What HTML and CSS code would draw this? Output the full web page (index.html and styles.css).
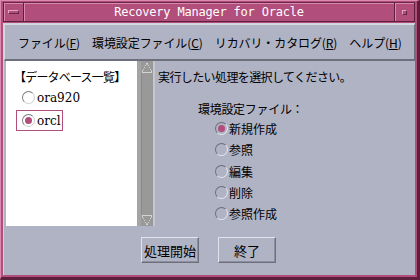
FILE: index.html
```html
<!DOCTYPE html>
<html lang="ja">
<head>
<meta charset="utf-8">
<title>Recovery Manager for Oracle</title>
<link rel="stylesheet" href="styles.css">
</head>
<body>
<div class="window">
  <div class="titlebar">
    <div class="tb-btn tb-menu"><span class="bar"></span></div>
    <div class="tb-title">Recovery Manager for Oracle</div>
    <div class="tb-btn tb-max"><span class="sq"></span></div>
  </div>
  <div class="client">
    <div class="menubar">
      <span class="mi">ファイル(<u>F</u>)</span>
      <span class="mi">環境設定ファイル(<u>C</u>)</span>
      <span class="mi">リカバリ・カタログ(<u>R</u>)</span>
      <span class="mi">ヘルプ(<u>H</u>)</span>
    </div>
    <div class="main">
      <div class="listpane">
        <div class="list-head">【データベース一覧】</div>
        <div class="list-item"><span class="radio white"></span>ora920</div>
        <div class="list-item focused"><span class="radio white on"></span>orcl</div>
      </div>
      <div class="scrollbar">
        <div class="sb-arrow sb-up"></div>
        <div class="sb-track"></div>
        <div class="sb-arrow sb-down"></div>
      </div>
      <div class="rightpane">
        <div class="prompt">実行したい処理を選択してください。</div>
        <div class="group-label">環境設定ファイル：</div>
        <div class="options">
          <div class="opt"><span class="radio on"></span>新規作成</div>
          <div class="opt"><span class="radio"></span>参照</div>
          <div class="opt"><span class="radio"></span>編集</div>
          <div class="opt"><span class="radio"></span>削除</div>
          <div class="opt"><span class="radio"></span>参照作成</div>
        </div>
      </div>
    </div>
    <div class="buttons">
      <button class="btn">処理開始</button>
      <button class="btn">終了</button>
    </div>
  </div>
</div>
</body>
</html>
```
FILE: styles.css
```css
html, body {
  margin: 0;
  padding: 0;
  width: 420px;
  height: 280px;
  overflow: hidden;
  background: #b24e7b;
}
.window {
  box-sizing: border-box;
  width: 420px;
  height: 280px;
  background: #b24e7b;
  border-top: 1px solid #d98aae;
  border-left: 1px solid #d98aae;
  border-right: 3px solid #5e1f3d;
  border-bottom: 3px solid #5e1f3d;
  padding: 1px 2px 2px 2px;
  display: flex;
  flex-direction: column;
  font-family: "Noto Sans CJK JP", "DejaVu Sans", sans-serif;
  color: #000;
}
.titlebar {
  height: 18px;
  display: flex;
  border: 1px solid #5e1f3d;
  border-top-color: #6a2446;
  background: #b24e7b;
  flex: none;
}
.tb-btn {
  width: 19px;
  display: flex;
  align-items: center;
  justify-content: center;
  border-right: 1px solid #5e1f3d;
  box-shadow: inset 1px 1px 0 #d98aae;
}
.tb-max {
  width: 19px;
  border-right: none;
  border-left: 1px solid #5e1f3d;
}
.tb-menu .bar {
  width: 9px;
  height: 2px;
  border: 1px solid #e3a4c1;
  border-right-color: #6a2446;
  border-bottom-color: #6a2446;
  background: #b24e7b;
}
.tb-max .sq {
  width: 3px;
  height: 3px;
  border: 1px solid #e3a4c1;
  border-right-color: #6a2446;
  border-bottom-color: #6a2446;
}
.tb-title {
  flex: 1;
  text-align: center;
  color: #ffffff;
  font-family: "DejaVu Sans Mono", monospace;
  font-size: 12px;
  line-height: 18px;
  letter-spacing: -0.2px;
  box-shadow: inset 1px 1px 0 #d98aae;
}
.client {
  flex: 1;
  display: flex;
  flex-direction: column;
  background: #b0b3c4;
  margin-top: 1px;
  border-left: 1px solid #cfd1dc;
  border-top: 1px solid #cfd1dc;
}
.menubar {
  height: 34px;
  display: flex;
  align-items: center;
  gap: 12px;
  padding-left: 13px;
  font-size: 12px;
  border-top: 1px solid #d7d9e2;
  border-left: 1px solid #d7d9e2;
  border-right: 1px solid #6d6f7c;
  border-bottom: 2px solid #6d6f7c;
  flex: none;
}
.mi {
  white-space: nowrap;
  letter-spacing: -0.1px;
}
.mi u {
  text-decoration: underline;
  text-underline-offset: 1px;
}
.main {
  display: flex;
  height: 165px;
  flex: none;
  padding-left: 2px;
}
.listpane {
  width: 135px;
  background: #ffffff;
  border-right: 4px solid #a4a4a4;
  padding: 8px 0 0 8px;
  box-sizing: border-box;
  font-size: 12px;
}
.list-head {
  line-height: 16px;
  white-space: nowrap;
  letter-spacing: -0.8px;
}
.list-item {
  display: flex;
  align-items: center;
  height: 21px;
  margin-left: 2px;
  width: 47px;
  box-sizing: border-box;
  padding-left: 5px;
  font-family: "DejaVu Serif", serif;
  font-size: 12px;
  border: 1px solid transparent;
}
.list-item:nth-child(2) {
  margin-top: 2px;
}
.list-item.focused {
  border-color: #b24e7b;
  margin-top: 2px;
}
.scrollbar {
  width: 12px;
  display: flex;
  flex-direction: column;
  background: #999999;
  border-right: 2px solid #c4c6d2;
}
.sb-arrow {
  height: 12px;
  position: relative;
}
.sb-up::before {
  content: "";
  position: absolute;
  left: 1px;
  top: 2px;
  width: 10px;
  height: 9px;
  background: linear-gradient(to top right, transparent 46%, #d4d4d4 47%, #d4d4d4 53%, transparent 54%) right/50% 100% no-repeat,
              linear-gradient(to top left, transparent 46%, #d4d4d4 47%, #d4d4d4 53%, transparent 54%) left/50% 100% no-repeat;
  border-bottom: 1px solid #d4d4d4;
}
.sb-track {
  flex: 1;
  border-left: 1px solid #8a8a8a;
}
.sb-down::before {
  content: "";
  position: absolute;
  left: 1px;
  top: 1px;
  width: 10px;
  height: 9px;
  background: linear-gradient(to bottom right, transparent 46%, #d4d4d4 47%, #d4d4d4 53%, transparent 54%) right/50% 100% no-repeat,
              linear-gradient(to bottom left, transparent 46%, #d4d4d4 47%, #d4d4d4 53%, transparent 54%) left/50% 100% no-repeat;
  border-top: 1px solid #d4d4d4;
}
.rightpane {
  flex: 1;
  padding: 8px 0 0 3px;
  font-size: 12px;
}
.prompt {
  line-height: 16px;
  white-space: nowrap;
  letter-spacing: -0.6px;
}
.group-label {
  margin-top: 16px;
  margin-left: 40px;
  line-height: 16px;
  letter-spacing: -0.3px;
}
.options {
  margin-left: 57px;
  margin-top: 1px;
  display: flex;
  flex-direction: column;
}
.opt {
  display: flex;
  align-items: center;
  height: 21.3px;
  white-space: nowrap;
}
.radio {
  box-sizing: border-box;
  width: 13px;
  height: 13px;
  border-radius: 50%;
  border: 1px solid;
  border-color: #6e6e76 #e6e6ec #e6e6ec #6e6e76;
  margin-right: 1px;
  display: inline-flex;
  align-items: center;
  justify-content: center;
  flex: none;
}
.radio.white {
  background: #ffffff;
  border-color: #7a7a7a #cfcfcf #cfcfcf #7a7a7a;
  margin-right: 2px;
}
.radio.on::after {
  content: "";
  width: 7px;
  height: 7px;
  border-radius: 50%;
  background: #b24e7b;
}
.buttons {
  flex: 1;
  display: flex;
  justify-content: center;
  align-items: flex-start;
  gap: 19px;
  padding-top: 11px;
  padding-right: 2px;
}
.btn {
  width: 58px;
  height: 26px;
  margin: 0;
  padding: 0;
  background: #b0b3c4;
  border: 1px solid;
  border-color: #e2e4ec #6d6f7c #6d6f7c #e2e4ec;
  box-shadow: inset -1px -1px 0 #8d8fa0;
  font-family: "Noto Sans CJK JP", sans-serif;
  font-size: 13px;
  color: #000;
}
```
